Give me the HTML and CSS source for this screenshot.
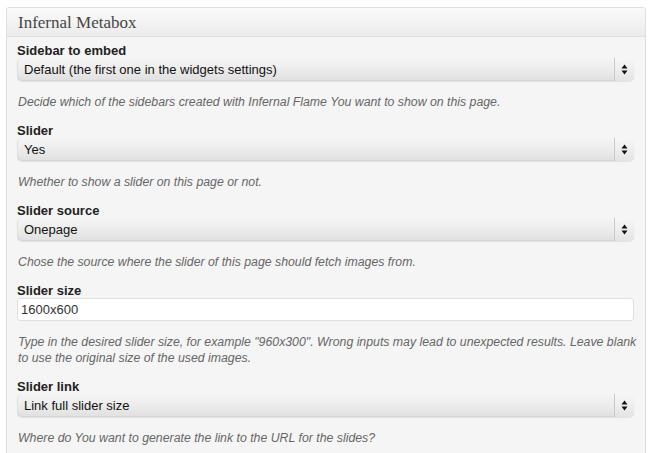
FILE: index.html
```html
<!DOCTYPE html>
<html>
<head>
<meta charset="utf-8">
<link rel="stylesheet" href="styles.css">
</head>
<body>
<div class="metabox">
  <div class="mb-header">Infernal Metabox</div>
  <div class="mb-body">
    <div class="field">
      <div class="label">Sidebar to embed</div>
      <div class="select"><span class="sel-text">Default (the first one in the widgets settings)</span><span class="sel-arrow"><svg width="7" height="11" viewBox="0 0 7 11"><path d="M3.5 0.5 L6.5 4.5 L0.5 4.5 Z M3.5 10.5 L6.5 6.5 L0.5 6.5 Z" fill="#111"/></svg></span></div>
      <div class="desc">Decide which of the sidebars created with Infernal Flame You want to show on this page.</div>
    </div>
    <div class="field">
      <div class="label">Slider</div>
      <div class="select"><span class="sel-text">Yes</span><span class="sel-arrow"><svg width="7" height="11" viewBox="0 0 7 11"><path d="M3.5 0.5 L6.5 4.5 L0.5 4.5 Z M3.5 10.5 L6.5 6.5 L0.5 6.5 Z" fill="#111"/></svg></span></div>
      <div class="desc">Whether to show a slider on this page or not.</div>
    </div>
    <div class="field">
      <div class="label">Slider source</div>
      <div class="select"><span class="sel-text">Onepage</span><span class="sel-arrow"><svg width="7" height="11" viewBox="0 0 7 11"><path d="M3.5 0.5 L6.5 4.5 L0.5 4.5 Z M3.5 10.5 L6.5 6.5 L0.5 6.5 Z" fill="#111"/></svg></span></div>
      <div class="desc">Chose the source where the slider of this page should fetch images from.</div>
    </div>
    <div class="field">
      <div class="label">Slider size</div>
      <div class="input">1600x600</div>
      <div class="desc">Type in the desired slider size, for example "960x300". Wrong inputs may lead to unexpected results. Leave blank to use the original size of the used images.</div>
    </div>
    <div class="field">
      <div class="label">Slider link</div>
      <div class="select"><span class="sel-text">Link full slider size</span><span class="sel-arrow"><svg width="7" height="11" viewBox="0 0 7 11"><path d="M3.5 0.5 L6.5 4.5 L0.5 4.5 Z M3.5 10.5 L6.5 6.5 L0.5 6.5 Z" fill="#111"/></svg></span></div>
      <div class="desc">Where do You want to generate the link to the URL for the slides?</div>
    </div>
  </div>
</div>
</body>
</html>
```
FILE: styles.css
```css
html, body {
  margin: 0;
  padding: 0;
  background: #ffffff;
}
body {
  padding: 7px 0 0 6px;
  font-family: "Liberation Sans", Arial, sans-serif;
  font-size: 13px;
  color: #333;
}
.metabox {
  width: 638px;
  border: 1px solid #dfdfdf;
  border-radius: 3px;
  background: #f5f5f5;
  overflow: hidden;
  height: 460px;
}
.mb-header {
  height: 28px;
  line-height: 29px;
  padding-left: 11px;
  font-family: "Liberation Serif", "Times New Roman", serif;
  font-size: 17px;
  color: #464646;
  background: linear-gradient(to bottom, #fafafa, #ececec);
  border-bottom: 1px solid #dfdfdf;
}
.mb-body {
  padding: 7px 11px 0 10px;
  display: flex;
  flex-direction: column;
  gap: 14px;
}
.field {
  display: flex;
  flex-direction: column;
}
.label {
  font-weight: bold;
  line-height: 14px;
  color: #222;
}
.select {
  height: 23px;
  box-sizing: border-box;
  display: flex;
  align-items: stretch;
  border-radius: 5px;
  background: linear-gradient(to bottom, #f5f5f5 0%, #ededed 45%, #e0e0e0 100%);
  box-shadow: inset 0 -1px 0 #d8d8d8, inset 1px 0 0 #e0e0e0, 0 1px 1px rgba(0,0,0,0.08);
  width: 617px;
}
.sel-text {
  flex: 1;
  padding-left: 7px;
  line-height: 23px;
  color: #111;
}
.sel-arrow {
  width: 19px;
  border-left: 1px solid #c8c8c8;
  display: flex;
  align-items: center;
  justify-content: center;
  background: linear-gradient(to bottom, #f6f6f6, #e4e4e4);
  border-radius: 0 5px 5px 0;
}
.input {
  height: 23px;
  box-sizing: border-box;
  width: 617px;
  background: #fff;
  border: 1px solid #dfdfdf;
  border-radius: 3px;
  padding-left: 3px;
  line-height: 21px;
  color: #333;
}
.desc {
  margin-top: 13px;
  margin-right: -10px;
  font-style: italic;
  font-size: 12.3px;
  color: #666;
  line-height: 16px;
  padding-left: 1px;
}
```
